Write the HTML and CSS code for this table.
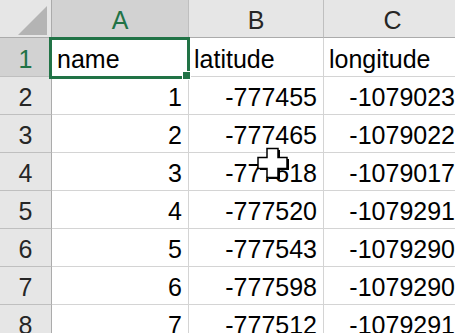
FILE: index.html
```html
<!DOCTYPE html>
<html lang="en">
<head>
    <meta charset="UTF-8">
    <meta name="viewport" content="width=device-width, initial-scale=1.0">
    <title>Sheet1</title>
    <link rel="stylesheet" href="styles.css">
</head>
<body>
    <div class="sheet">
        <div class="corner"><span class="corner-tri"></span></div>
        <div class="col-head active">A</div>
        <div class="col-head">B</div>
        <div class="col-head">C</div>

        <div class="row-head active">1</div>
        <div class="cell text selected">name<span class="sel-box"><span class="handle"></span></span></div>
        <div class="cell text">latitude</div>
        <div class="cell text">longitude</div>

        <div class="row-head">2</div>
        <div class="cell">1</div>
        <div class="cell">-777455</div>
        <div class="cell">-1079023</div>

        <div class="row-head">3</div>
        <div class="cell">2</div>
        <div class="cell">-777465</div>
        <div class="cell">-1079022</div>

        <div class="row-head">4</div>
        <div class="cell">3</div>
        <div class="cell">-777518</div>
        <div class="cell">-1079017</div>

        <div class="row-head">5</div>
        <div class="cell">4</div>
        <div class="cell">-777520</div>
        <div class="cell">-1079291</div>

        <div class="row-head">6</div>
        <div class="cell">5</div>
        <div class="cell">-777543</div>
        <div class="cell">-1079290</div>

        <div class="row-head">7</div>
        <div class="cell">6</div>
        <div class="cell">-777598</div>
        <div class="cell">-1079290</div>

        <div class="row-head">8</div>
        <div class="cell">7</div>
        <div class="cell">-777512</div>
        <div class="cell">-1079291</div>
    </div>

    <!-- excel cell cursor -->
    <svg class="cursor" width="36" height="36" viewBox="0 0 36 36">
        <path d="M12 3h11v9h9v11h-9v9h-11v-9h-9v-11h9z" fill="#000"/>
        <path d="M10 1.5h11v9h9v11h-9v9h-11v-9h-9v-11h9z" fill="#fff" stroke="#000" stroke-width="1.5"/>
    </svg>
</body>
</html>
```

FILE: styles.css
```css
body {
    margin: 0;
    background: #fff;
    font-family: "Liberation Sans", Arial, sans-serif;
    font-size: 25px;
    line-height: 25px;
    color: #000;
    overflow: hidden;
}
.sheet {
    display: grid;
    grid-template-columns: 52px 137px 135px 138px;
    grid-template-rows: 38px 39px repeat(7, 38px);
}
.corner {
    position: relative;
    background: #e6e6e6;
    border-right: 1px solid #ababab;
    border-bottom: 1px solid #ababab;
}
.corner-tri {
    position: absolute;
    right: 4px;
    bottom: 2px;
    width: 0;
    height: 0;
    border-left: 29px solid transparent;
    border-bottom: 29px solid #b4b4b4;
}
.col-head {
    display: flex;
    align-items: center;
    justify-content: center;
    padding-top: 4px;
    background: #e6e6e6;
    color: #262626;
    border-right: 1px solid #bfbfbf;
    border-bottom: 1px solid #ababab;
}
.row-head {
    display: flex;
    align-items: flex-end;
    justify-content: center;
    padding-bottom: 4px;
    background: #e6e6e6;
    color: #262626;
    border-right: 1px solid #ababab;
    border-bottom: 1px solid #bfbfbf;
}
.col-head.active, .row-head.active {
    background: #d2d2d2;
    color: #217346;
}
.cell {
    display: flex;
    align-items: flex-end;
    justify-content: flex-end;
    padding: 0 6px 4px 5px;
    white-space: nowrap;
    border-right: 1px solid #d4d4d4;
    border-bottom: 1px solid #d4d4d4;
}
.cell.text {
    justify-content: flex-start;
}
.selected {
    position: relative;
}
.sel-box {
    position: absolute;
    left: -3px;
    top: -1px;
    width: 141px;
    height: 42px;
    box-sizing: border-box;
    border: 3px solid #217346;
}
.handle {
    position: absolute;
    right: -4px;
    bottom: -4px;
    width: 7px;
    height: 7px;
    background: #217346;
    border: 1px solid #fff;
}
.cursor {
    position: absolute;
    left: 257px;
    top: 147px;
}
```
